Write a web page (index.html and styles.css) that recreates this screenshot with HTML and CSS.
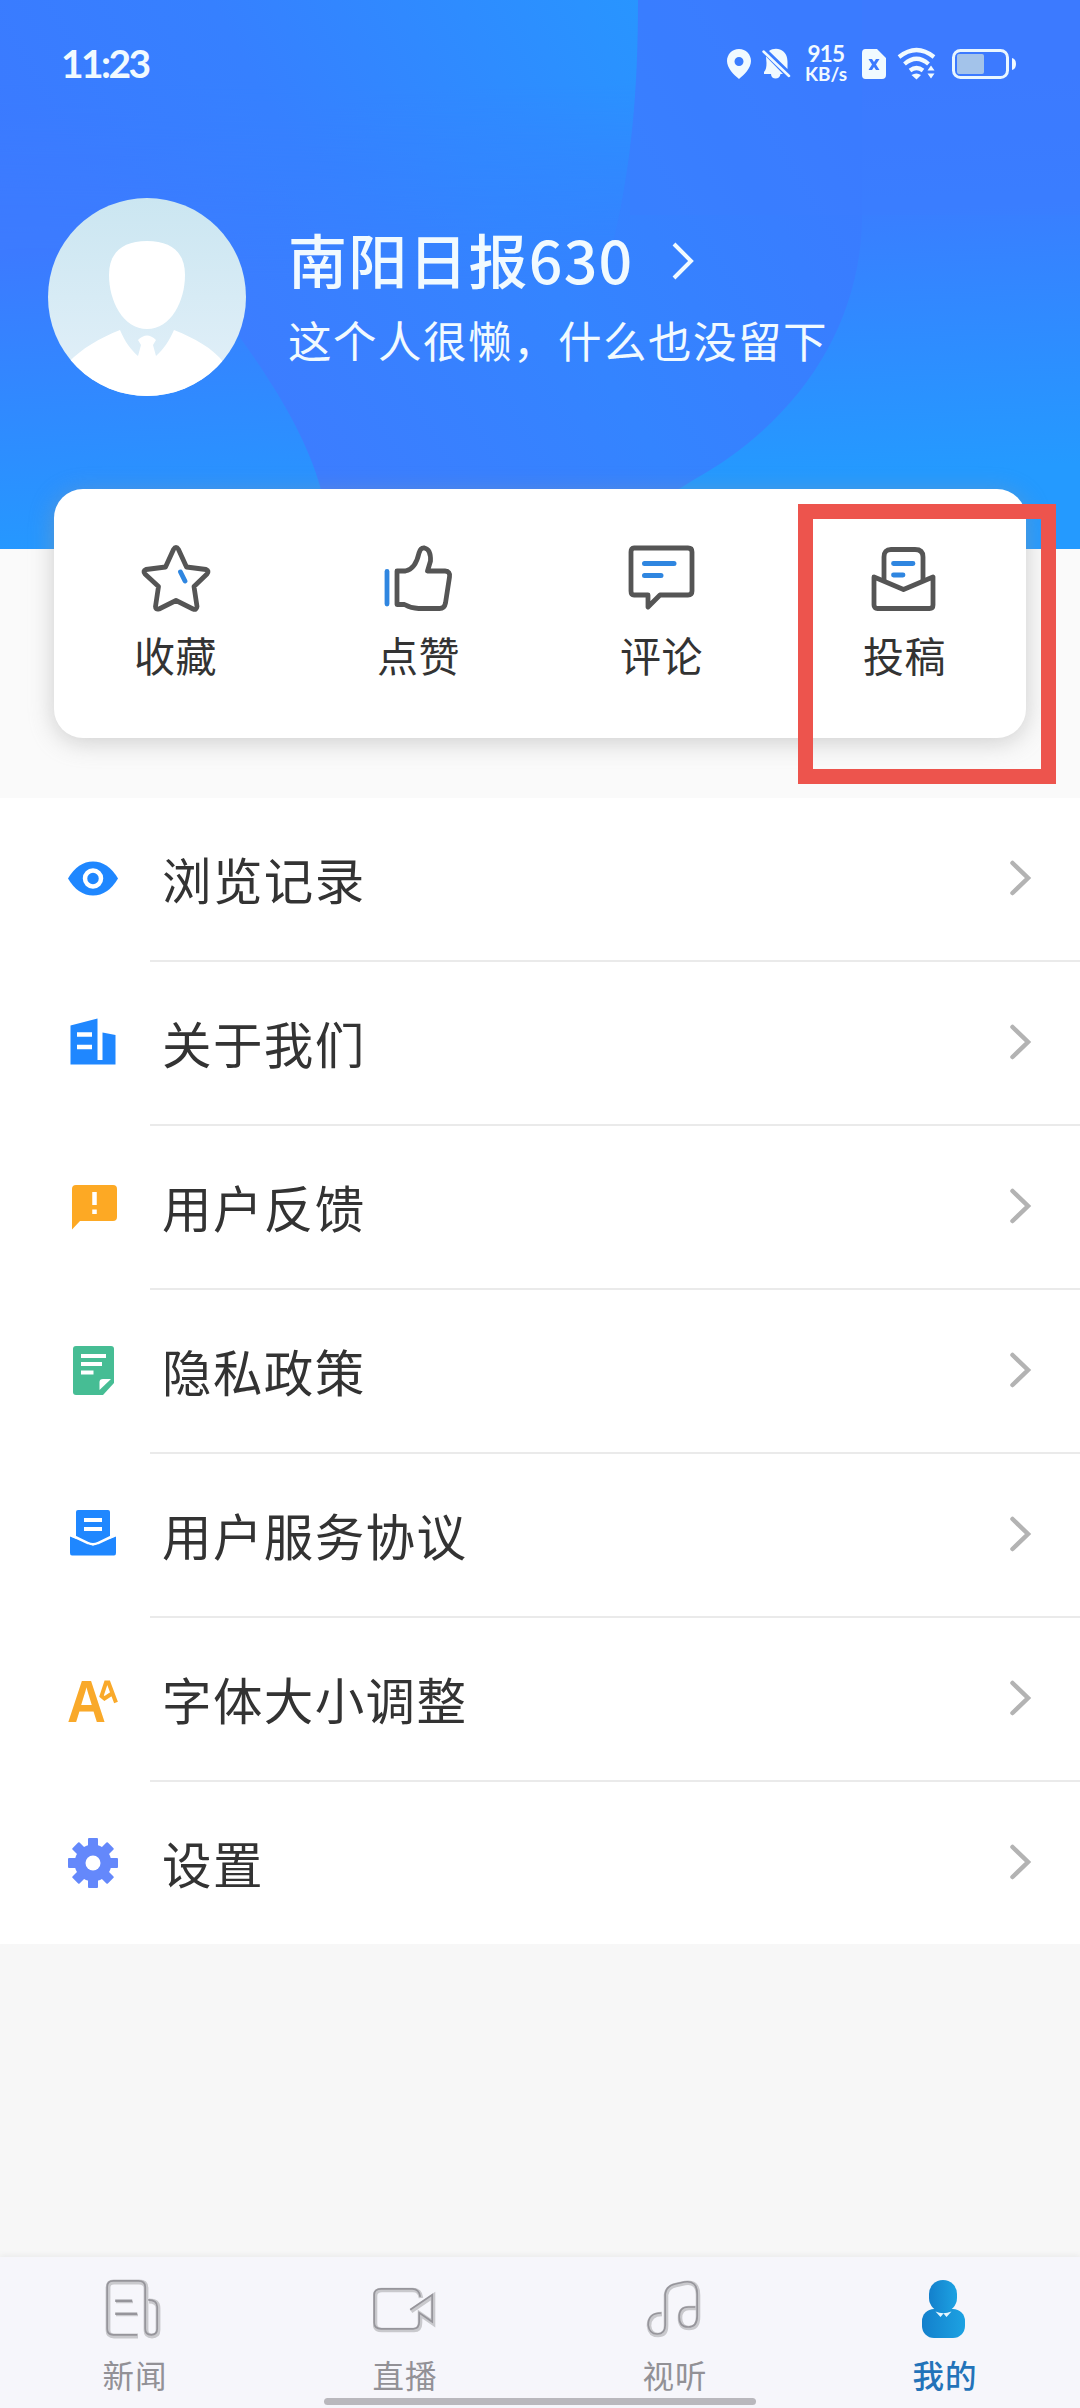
FILE: index.html
```html
<!DOCTYPE html>
<html lang="zh-CN">
<head>
<meta charset="utf-8">
<title>我的</title>
<link rel="stylesheet" href="styles.css">
</head>
<body>
<div class="app">
  <header class="header">
    <svg class="header-bg" viewBox="0 0 1080 549" preserveAspectRatio="none">
      <defs>
        <linearGradient id="top" gradientUnits="userSpaceOnUse" x1="40" y1="330" x2="640" y2="0">
          <stop offset="0" stop-color="#3c79ff"/><stop offset=".45" stop-color="#3680ff"/><stop offset="1" stop-color="#2895ff"/>
        </linearGradient>
        <linearGradient id="right" gradientUnits="userSpaceOnUse" x1="940" y1="80" x2="960" y2="470">
          <stop offset="0" stop-color="#3c79ff"/><stop offset=".3" stop-color="#3a7dff"/><stop offset="1" stop-color="#249aff"/>
        </linearGradient>
        <linearGradient id="mid" gradientUnits="userSpaceOnUse" x1="860" y1="150" x2="290" y2="500">
          <stop offset="0" stop-color="#3a7bff"/><stop offset=".5" stop-color="#3484ff"/><stop offset="1" stop-color="#3d7cff"/>
        </linearGradient>
        <linearGradient id="left" gradientUnits="userSpaceOnUse" x1="40" y1="250" x2="60" y2="549">
          <stop offset="0" stop-color="#3c7aff"/><stop offset="1" stop-color="#2598ff"/>
        </linearGradient>
        <linearGradient id="fade" x1="0" y1="0" x2="0" y2="1">
          <stop offset="0" stop-color="#fff"/><stop offset=".2" stop-color="#fff"/><stop offset=".7" stop-color="#000"/>
        </linearGradient>
        <mask id="topmask"><rect width="1080" height="400" fill="url(#fade)"/></mask>
      </defs>
      <rect width="1080" height="549" fill="url(#right)"/>
      <path d="M0 0H862V220C860 325 800 420 695 479C640 515 560 549 500 549H0Z" fill="url(#mid)"/>
      <rect x="630" width="450" height="215" fill="#3b7cff" opacity=".4"/>
      <path d="M0 0H638C638 130 625 250 560 400H0Z" fill="url(#top)" mask="url(#topmask)"/>
      <path d="M0 250C100 240 190 270 241 339C285 400 308 445 320 486L334 549H0Z" fill="url(#left)"/>
    </svg>
    <div class="status">
      <span class="time">11:23</span>
      <div class="status-icons">
        <svg width="330" height="50" viewBox="0 0 330 50" fill="#f1faff">
          <path fill-rule="evenodd" d="M19 9C12 9 7 14.500 7 21C7 28 14 35 19 39C24 35 31 28 31 21C31 14.500 26 9 19 9ZM19 17A4.500 4.500 0 1 1 19 26A4.500 4.500 0 1 1 19 17Z"/>
          <path d="M49 11C52 8.500 57 8 60 9.500C66 12 67.500 17 67.500 22V29ZM46 16.500L63 34H60.500C60 40 51 40 51 34H44V32C46 30 46.500 27 46.500 23Z"/>
          <path d="M43.500 11.500L69 36" stroke="#f1faff" stroke-width="2.500" stroke-linecap="round"/>
          <path fill-rule="evenodd" d="M145 9H157L166 18V35Q166 39 162 39H145.500Q142 39 142 35V13Q142 9 145.500 9ZM148.500 19L152 24.500L148.500 30H152L154 27L156 30H159.500L156 24.500L159.500 19H156L154 22L152 19Z"/>
          <path d="M179 17Q196.500 3 214 17M184.500 24Q196.500 13.500 208.500 24M190 30.500Q196.500 25.500 203 30.500" fill="none" stroke="#f1faff" stroke-width="4.200"/>
          <path d="M191.500 35Q196.500 32 201 35L196.500 39.500ZM207.500 30.500L211 25.500L214.500 30.500ZM207.500 33.500L211 38.500L214.500 33.500Z"/>
          <rect x="233.500" y="10.500" width="54" height="27" rx="7" fill="none" stroke="#e9f6ff" stroke-width="3"/>
          <rect x="237" y="14" width="27" height="20" rx="2" fill="#a3c3ea"/>
          <path d="M292 18Q296 19 296 24Q296 29 292 30Z"/>
        </svg>
        <div class="speed"><span class="rate">915</span><span class="unit">KB/s</span></div>
      </div>
    </div>
    <div class="profile">
      <svg class="avatar" viewBox="0 0 198 198">
        <defs>
          <linearGradient id="av" x1="0" y1="0" x2="0" y2="1"><stop offset="0" stop-color="#cbe6f1"/><stop offset="1" stop-color="#e3f0f9"/></linearGradient>
          <clipPath id="round"><circle cx="99" cy="99" r="99"/></clipPath>
        </defs>
        <g clip-path="url(#round)">
          <rect width="198" height="198" fill="url(#av)"/>
          <path d="M99 43C124 43 137 55 137 77C137 103 123 131 99 131C75 131 61 103 61 77C61 55 74 43 99 43Z" fill="#fff"/>
          <path d="M20 165C34 150 52 140 72 132C77 144 83 152 90 158L93 147L90 142Q99 133 108 142L105 147L108 158C116 151 121 143 126 132C146 140 165 150 176 165V198H20Z" fill="#fff"/>
        </g>
      </svg>
      <div class="who">
        <div class="name-row"><span class="name">南阳日报630</span>
          <svg class="name-arrow" width="24" height="40" viewBox="0 0 24 40"><path d="M3 3L20 20L3 37" fill="none" stroke="#f1faff" stroke-width="4"/></svg>
        </div>
        <div class="bio">这个人很懒，什么也没留下</div>
      </div>
    </div>
  </header>

  <section class="card">
    <div class="action">
      <svg width="72" height="70" viewBox="0 0 72 70" fill="none" stroke="#555" stroke-width="4.800" stroke-linejoin="round">
        <path d="M33.500 5.500Q36 1.500 38.500 5.500L46.500 23L66 25.500Q69.500 27 67 30L54 42.500L57 62.500Q56.500 66.500 53 65L36 56.500L19 65Q15.500 66 15.500 62.500L18.500 42.500L5 30Q2.500 27 6 25.500L25.500 23Z"/>
        <path d="M40.500 28L45 37" stroke="#2f86e0" stroke-linecap="round"/>
      </svg><span>收藏</span>
    </div>
    <div class="action">
      <svg width="72" height="70" viewBox="1.500 0 72 70" fill="none" stroke="#555" stroke-width="4.800" stroke-linejoin="round">
        <path d="M15.500 27H24Q34 25 37.500 9Q39 3.500 43 4Q49.500 5.500 49 17L46 27H63.500Q69 27.500 68 33L64 59Q63 64.500 58 64.500H37Q30 64.500 23 60.500H15.500Z"/>
        <path d="M5.500 27.500V60" stroke="#2f86e0" stroke-linecap="round"/>
      </svg><span>点赞</span>
    </div>
    <div class="action">
      <svg width="72" height="70" viewBox="0 0 72 70" fill="none" stroke="#555" stroke-width="4.800" stroke-linejoin="round">
        <path d="M8 4H62Q66 4 66 8V47Q66 51 62 51H34L22 63V51H8Q5 51 5 47V8Q5 4 8 4Z"/>
        <path d="M18.500 19.500H48M18.500 31.500H35" stroke="#2f86e0" stroke-width="5" stroke-linecap="round"/>
      </svg><span>评论</span>
    </div>
    <div class="action">
      <svg width="72" height="70" viewBox="1 0 72 70" fill="none" stroke="#555" stroke-width="4.800" stroke-linejoin="round">
        <path d="M16 37V13Q16 5.500 23 5.500H47Q55 5.500 55 13V37"/>
        <path d="M6 33L35.500 45.500L65 33V61Q65 64.500 61.500 64.500H9.500Q6 64.500 6 61Z"/>
        <path d="M25.500 19.500H45M25.500 31H35" stroke="#2f86e0" stroke-linecap="round"/>
      </svg><span>投稿</span>
    </div>
    <div class="highlight"></div>
  </section>

  <main class="menu">
    <div class="row">
      <svg class="ico" viewBox="0 0 54 54"><path fill="#1f87ff" d="M2 26.500Q12 9.500 27 9.500Q42 9.500 52 26.500Q42 43.500 27 43.500Q12 43.500 2 26.500Z"/><circle cx="27" cy="26.500" r="8" fill="none" stroke="#fff" stroke-width="4.500"/></svg>
      <div class="cell"><span>浏览记录</span><svg class="arrow" viewBox="0 0 24 40"><path d="M4.500 5L20 20L4.500 35"/></svg></div>
    </div>
    <div class="row">
      <svg class="ico" viewBox="0 0 54 54"><path fill="#1f87ff" d="M4.500 9.500L31.500 2.500V44H36.500V16.500L49.500 19V48.500H4.500Z"/><path d="M11 18.500H26M11 31H26" stroke="#fff" stroke-width="4.500"/></svg>
      <div class="cell"><span>关于我们</span><svg class="arrow" viewBox="0 0 24 40"><path d="M4.500 5L20 20L4.500 35"/></svg></div>
    </div>
    <div class="row">
      <svg class="ico" viewBox="0 0 54 54"><path fill="#fda924" d="M10 5H47Q51 5 51 9V37Q51 41 47 41H14L6 49.500V9Q6 5 10 5Z"/><path d="M28.500 12V25M28.500 29.500V34" stroke="#fff" stroke-width="4.500"/></svg>
      <div class="cell"><span>用户反馈</span><svg class="arrow" viewBox="0 0 24 40"><path d="M4.500 5L20 20L4.500 35"/></svg></div>
    </div>
    <div class="row">
      <svg class="ico" viewBox="0 0 54 54"><path fill="#46bd94" d="M10 2H45Q48 2 48 5V39L37 51H10Q7 51 7 48V5Q7 2 10 2Z"/><path d="M15 12H40M15 20H36M15 28.500H27.500" stroke="#fff" stroke-width="4"/><path fill="#fff" d="M33.500 46V38Q33.500 35 37 35H45Z"/></svg>
      <div class="cell"><span>隐私政策</span><svg class="arrow" viewBox="0 0 24 40"><path d="M4.500 5L20 20L4.500 35"/></svg></div>
    </div>
    <div class="row">
      <svg class="ico" viewBox="0 0 54 54"><path fill="#1f87ff" d="M12 2H42Q44 2 44 4V31L32 37H22L10 31V4Q10 2 12 2Z"/><path d="M18 12H36M18 21H36" stroke="#fff" stroke-width="4"/><path fill="#1f87ff" d="M4 28.500L27 37.500L50 28.500V45Q50 47.500 48 47.500H6Q4 47.500 4 45Z"/><path d="M5 27L22 35Q27 37.500 32 35L49 27" fill="none" stroke="#fff" stroke-width="2.500"/></svg>
      <div class="cell"><span>用户服务协议</span><svg class="arrow" viewBox="0 0 24 40"><path d="M4.500 5L20 20L4.500 35"/></svg></div>
    </div>
    <div class="row">
      <svg class="ico" viewBox="0 0 54 54"><text class="big-a" x="1" y="49.500" textLength="39" lengthAdjust="spacingAndGlyphs">A</text><path d="M50 30.500L42.500 10.500H40L35.500 24L38.500 26.500L46 21.500" fill="none" stroke="#f9a92a" stroke-width="4"/></svg>
      <div class="cell"><span>字体大小调整</span><svg class="arrow" viewBox="0 0 24 40"><path d="M4.500 5L20 20L4.500 35"/></svg></div>
    </div>
    <div class="row">
      <svg class="ico" viewBox="0 0 54 54" fill="#6488fb"><rect x="22" y="2" width="10" height="50" rx="1"/><rect x="2" y="22" width="50" height="10" rx="1"/><rect x="22" y="2" width="10" height="50" rx="1" transform="rotate(45 27 27)"/><rect x="2" y="22" width="50" height="10" rx="1" transform="rotate(45 27 27)"/><circle cx="27" cy="27" r="18.500"/><circle cx="27" cy="27" r="7.500" fill="#fff"/></svg>
      <div class="cell"><span>设置</span><svg class="arrow" viewBox="0 0 24 40"><path d="M4.500 5L20 20L4.500 35"/></svg></div>
    </div>
  </main>

  <nav class="tabs">
    <div class="tab">
      <svg width="64" height="64" viewBox="1 0 64 64" fill="none">
        <defs><g id="news"><path d="M36 58H12Q6 58 6 52V10Q6 4 12 4H37Q44 4 44 10V52Q44 58 50 58Q56 58 56 52V30Q56 23 47 23"/><path d="M14 24H31M14 37H36" stroke-width="2.500"/></g></defs>
        <use href="#news" stroke="#c9c9cd" stroke-width="4.800"/><use href="#news" x="-.8" y="-1.200" stroke="#96959b" stroke-width="1.700"/>
      </svg><span>新闻</span>
    </div>
    <div class="tab">
      <svg width="64" height="64" viewBox="1 0 64 64" fill="none">
        <defs><path id="cam" d="M49 20Q48 12 41 12H10Q3 12 3 18V46Q3 52 10 52H42Q48 52 48 45V36L61 45V18L39 33"/></defs>
        <use href="#cam" stroke="#c9c9cd" stroke-width="4.600"/><use href="#cam" x="-.8" y="-1.200" stroke="#96959b" stroke-width="1.700"/>
      </svg><span>直播</span>
    </div>
    <div class="tab">
      <svg width="64" height="64" viewBox="1 0 64 64" fill="none">
        <defs><path id="note" d="M20 36Q7 36 7 48Q8 57 16 57Q24 57 24 48V17Q25 9 34 7L43 5Q56 3 56 17V39Q56 50 47 50Q38 50 38 40Q38 30 47 30H54"/></defs>
        <use href="#note" stroke="#c9c9cd" stroke-width="4.600"/><use href="#note" x="-.8" y="-1" stroke="#96959b" stroke-width="1.700"/>
      </svg><span>视听</span>
    </div>
    <div class="tab active">
      <svg width="64" height="64" viewBox="1 0 64 64">
        <defs><linearGradient id="me" x1="0" x2="1"><stop offset="0" stop-color="#1380cc"/><stop offset="1" stop-color="#1da2e2"/></linearGradient></defs>
        <rect x="10" y="31" width="43" height="29" rx="12" fill="url(#me)"/>
        <rect x="17" y="2" width="28" height="32" rx="14" fill="url(#me)"/>
        <path d="M23.500 33.500L28.500 39L31.500 35.500L34.500 39L39.500 33.500Q31 37 23.500 33.500Z" fill="#e6f7ff"/>
      </svg><span>我的</span>
    </div>
    <div class="home-indicator"></div>
  </nav>
</div>
</body>
</html>
```
FILE: styles.css
```css
* { box-sizing: border-box; }
body { margin: 0; font-family: "Noto Sans CJK SC", sans-serif; color: #333; }
svg { display: block; flex: none; }
.app { width: 1080px; height: 2408px; display: flex; flex-direction: column; background: linear-gradient(#fafafa 798px, #f7f7f7 798px); overflow: hidden; }

.header { position: relative; height: 549px; flex: none; color: #f1faff; }
.header-bg { position: absolute; inset: 0; width: 1080px; height: 549px; }
.status { position: relative; height: 128px; display: flex; justify-content: space-between; padding: 2px 30px 0 61px; align-items: center; }
.time { font: 700 39px/1 Lato, sans-serif; letter-spacing: -2.600px; margin-top: -3px; }
.status-icons { position: relative; width: 330px; height: 50px; }
.speed { position: absolute; left: 83px; top: 4px; width: 46px; display: flex; flex-direction: column; align-items: center; font-family: Lato, sans-serif; font-weight: 700; }
.rate { font-size: 22.500px; line-height: 20px; letter-spacing: -.8px; }
.unit { font-size: 19px; line-height: 20px; }
.profile { position: relative; display: flex; padding: 70px 0 0 48px; gap: 43px; }
.avatar { width: 198px; height: 198px; }
.who { padding-top: 27px; }
.name-row { display: flex; align-items: center; gap: 38px; height: 72px; }
.name { font-size: 59px; font-weight: 500; letter-spacing: 1.200px; line-height: 72px; margin-top: -5px; margin-left: -1px; }
.bio { font-size: 43.500px; letter-spacing: 1.500px; line-height: 60px; margin-top: 13px; margin-left: -1px; white-space: nowrap; }

.card { position: relative; flex: none; margin: -60px 54px 60px; height: 249px; background: #fff; border-radius: 29px; display: grid; grid-template-columns: repeat(4, 1fr); box-shadow: 0 4px 24px rgba(150, 150, 150, .45); }
.action { display: flex; flex-direction: column; align-items: center; padding-top: 55px; }
.action span { font-size: 41px; line-height: 52px; letter-spacing: .6px; margin-top: 14px; }
.highlight { position: absolute; left: 744px; top: 15px; width: 258px; height: 280px; border: 15px solid #ed544d; }

.menu { flex: none; background: #fff; }
.row { display: flex; align-items: stretch; height: 164px; padding-left: 66px; }
.row:last-child { height: 162px; }
.ico { width: 54px; height: 54px; align-self: flex-start; margin-top: 54px; overflow: visible; }
.big-a { font: 700 60px "Liberation Sans", sans-serif; fill: #f9a92a; }
.cell { flex: 1; margin-left: 30px; padding: 2px 48px 0 12px; border-bottom: 2px solid #eaeaea; display: flex; align-items: center; justify-content: space-between; font-size: 49.500px; letter-spacing: 1.400px; }
.cell span { margin-top: -3px; }
.row:last-child .cell { border-bottom: 0; }
.arrow { width: 24px; height: 40px; margin-top: -5px; fill: none; stroke: #b3b3b3; stroke-width: 4.500; stroke-linecap: round; }

.tabs { position: relative; flex: none; height: 151px; margin-top: auto; background: #f6f6fb; display: grid; grid-template-columns: repeat(4, 1fr); box-shadow: 0 -2px 6px rgba(0, 0, 0, .05); }
.tab { display: flex; flex-direction: column; align-items: center; padding-top: 21px; color: #929196; }
.tab span { font-size: 31.500px; line-height: 40px; letter-spacing: 1px; margin-top: 12px; }
.tab.active { color: #2373b9; }
.tab.active span { font-weight: 500; }
.home-indicator { position: absolute; left: 324px; top: 141px; width: 432px; height: 7px; border-radius: 4px; background: #b9b8bd; }
```
